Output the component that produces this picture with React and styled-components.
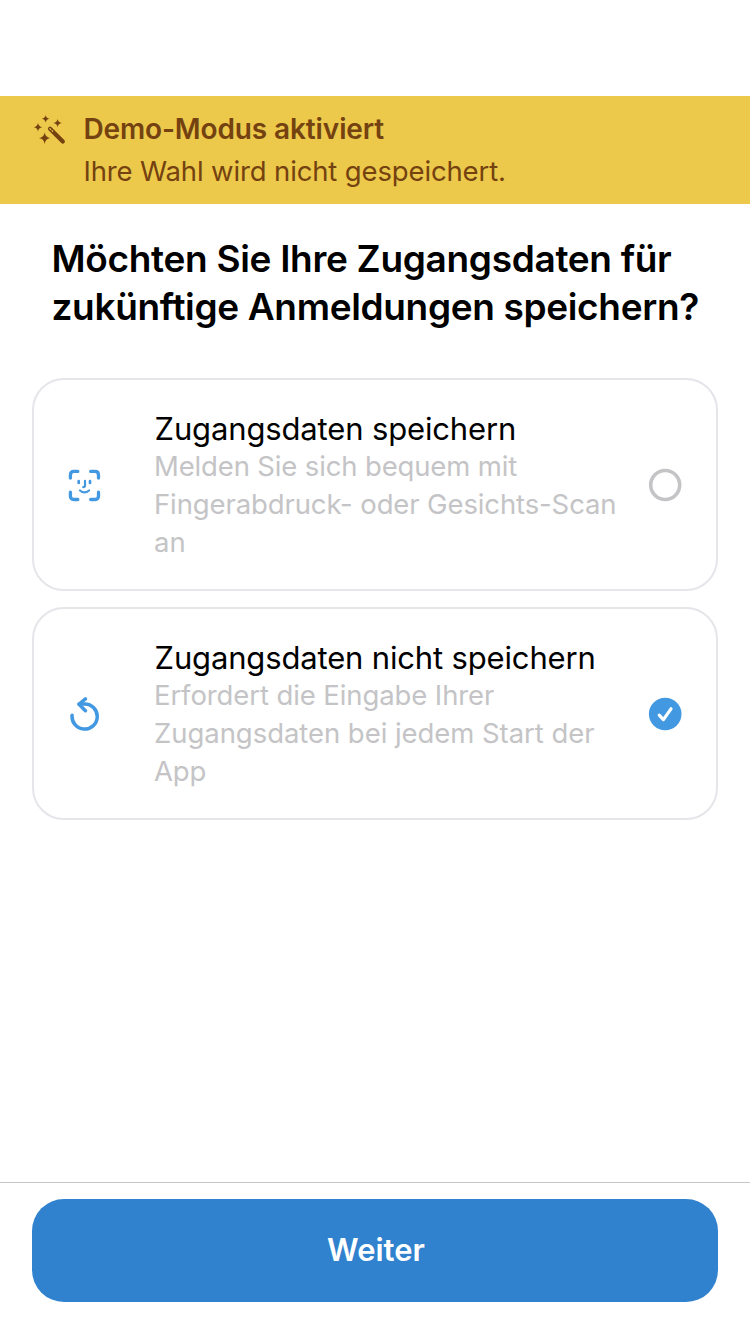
import React, { useState } from "react";
import styled, { createGlobalStyle } from "styled-components";

const GlobalStyle = createGlobalStyle`
  * { box-sizing: border-box; }
  body {
    margin: 0;
    background: #fff;
    color: #000;
    font-family: Inter, "Liberation Sans", sans-serif;
    -webkit-font-smoothing: antialiased;
  }
`;

const Screen = styled.div`
  display: flex;
  flex-direction: column;
  width: 750px;
  height: 1334px;
  padding-top: 96px;
  background: #fff;
`;

const Banner = styled.section`
  display: flex;
  flex: none;
  height: 108px;
  padding: 12px 32px 0;
  background: #ecc94b;
  color: #744210;
`;

const BannerIcon = styled.svg`
  flex: none;
  width: 36px;
  height: 36px;
  margin: 8px 15.4px 0 0;
  overflow: visible;
`;

const BannerText = styled.p`
  margin: 0;
  font-size: ${(p) => (p.$strong ? 28 : 27.5)}px;
  line-height: 42px;
  font-weight: ${(p) => (p.$strong ? 600 : 400)};
  letter-spacing: ${(p) => p.$tracking || 0}px;
  white-space: nowrap;
`;

const Main = styled.main`
  flex: 1;
  padding: 31px 32px 0;
`;

const Heading = styled.h1`
  margin: 0 0 47px 19.5px;
  font-size: 37px;
  line-height: 48px;
  font-weight: 600;
  white-space: nowrap;
`;

const HeadingLine = styled.span`
  display: block;
  letter-spacing: ${(p) => p.$tracking || 0}px;
`;

const Options = styled.div`
  display: flex;
  flex-direction: column;
  gap: 16px;
`;

const OptionCard = styled.button`
  display: flex;
  align-items: center;
  width: 100%;
  height: 213px;
  padding: 0 34px 0 33px;
  border: 2px solid #e5e5ea;
  border-radius: 32px;
  background: #fff;
  color: inherit;
  font-family: inherit;
  text-align: left;
`;

const OptionIcon = styled.svg`
  flex: none;
  width: 34px;
  height: 34px;
  margin: 0 53px 0 0;
  color: #4299e1;
`;

const OptionBody = styled.span`
  flex: 1;
  white-space: nowrap;
`;

const OptionTitle = styled.span`
  display: block;
  margin: 1px 0 -1px 0.6px;
  font-size: 31px;
  line-height: 38px;
  letter-spacing: ${(p) => p.$tracking || 0}px;
`;

const OptionLine = styled.span`
  display: block;
  font-size: 27.5px;
  line-height: 38px;
  color: #c4c4c6;
  letter-spacing: ${(p) => p.$tracking || 0}px;
`;

const RadioIcon = styled.svg`
  flex: none;
  width: 34px;
  height: 34px;
`;

const Footer = styled.footer`
  flex: none;
  height: 152px;
  padding: 16px 32px 0;
  border-top: 1px solid #c6c6c8;
`;

const PrimaryButton = styled.button`
  display: flex;
  align-items: center;
  justify-content: center;
  width: 100%;
  height: 103px;
  padding: 0 0 3px 2px;
  border: 0;
  border-radius: 32px;
  background: #3182ce;
  color: #fff;
  font-family: inherit;
  font-size: 31px;
  font-weight: 600;
`;

const WandIcon = () => (
  <BannerIcon viewBox="0 0 36 36" fill="currentColor" aria-hidden="true">
    <path d="M13.7-1Q14.1 2.1 17.4 2.7Q14.1 3.3 13.7 6.6Q13.1 3.3 9.9 2.7Q13.1 2.1 13.7-1Z" />
    <path d="M25.6 3.1Q26.2 6.5 29.8 7.1Q26.2 7.7 25.6 11.3Q25 7.7 21.4 7.1Q25 6.5 25.6 3.1Z" />
    <path d="M6 7.1Q6.6 10.7 10.2 11.3Q6.6 11.9 6 15.5Q5.4 11.9 1.8 11.3Q5.4 10.7 6 7.1Z" />
    <path d="M12.7 16.4Q13.5 21.2 18.3 22.1Q13.5 22.9 12.7 27.9Q11.8 22.9 7 22.1Q11.8 21.2 12.7 16.4Z" />
    <path d="M18 12.7L30.8 25.5" fill="none" stroke="currentColor" strokeWidth="4.2" strokeLinecap="round" />
    <path d="M17.9 12.6L22 16.7" fill="none" stroke="#ecc94b" strokeWidth="1.2" strokeLinecap="round" strokeDasharray="1 1.9" />
  </BannerIcon>
);

const FaceIcon = () => (
  <OptionIcon viewBox="0 0 34 34" fill="none" stroke="currentColor" strokeLinecap="round" strokeLinejoin="round" aria-hidden="true">
    <path strokeWidth="3.3" d="M3.4 10.1V6.9Q3.4 3.4 6.9 3.4H10.8M23.7 3.4H28Q31.5 3.4 31.5 6.9V10.1M31.5 24.2V28Q31.5 31.5 28 31.5H23.7M10.8 31.5H6.9Q3.4 31.5 3.4 28V24.2" />
    <path strokeWidth="2.7" d="M11.7 13.2V14.9M23 13.2V14.9" />
    <path strokeWidth="2.2" d="M18 12.8V17.5Q18 19.1 16.2 19.1M13 22.5Q17.5 26.3 22 22.5" />
  </OptionIcon>
);

const ResetIcon = () => (
  <OptionIcon viewBox="0 0 34 34" fill="none" stroke="currentColor" strokeWidth="3.5" strokeLinecap="round" strokeLinejoin="round" aria-hidden="true">
    <path d="M5.1 18.3A12.6 12.6 0 1 0 17.7 6.9H12" />
    <path d="M18.4 1.9L12 7.3L18.4 13.7" />
  </OptionIcon>
);

const Radio = ({ checked }) => (
  <RadioIcon viewBox="0 0 34 34" fill="none" aria-hidden="true">
    {checked ? (
      <>
        <circle cx="17.2" cy="17" r="16.3" fill="#4299e1" />
        <path d="M11.2 18.2L15.4 22.6L23 11.8" stroke="#fff" strokeWidth="3.2" strokeLinecap="round" strokeLinejoin="round" />
      </>
    ) : (
      <circle cx="17.2" cy="17" r="14.5" stroke="#c4c4c6" strokeWidth="3.6" />
    )}
  </RadioIcon>
);

const options = [
  {
    id: "save",
    icon: <FaceIcon />,
    title: ["Zugangsdaten speichern", -0.15],
    lines: [
      ["Melden Sie sich bequem mit", -0.15],
      ["Fingerabdruck- oder Gesichts-Scan", -0.12],
      ["an", 0],
    ],
  },
  {
    id: "discard",
    icon: <ResetIcon />,
    title: ["Zugangsdaten nicht speichern", -0.16],
    lines: [
      ["Erfordert die Eingabe Ihrer", -0.1],
      ["Zugangsdaten bei jedem Start der", -0.05],
      ["App", -0.2],
    ],
  },
];

export default function App() {
  const [selected, setSelected] = useState("discard");
  return (
    <>
      <GlobalStyle />
      <Screen>
        <Banner>
          <WandIcon />
          <div>
            <BannerText $strong $tracking={-0.12}>Demo-Modus aktiviert</BannerText>
            <BannerText $tracking={-0.14}>Ihre Wahl wird nicht gespeichert.</BannerText>
          </div>
        </Banner>
        <Main>
          <Heading>
            <HeadingLine $tracking={-0.31}>Möchten Sie Ihre Zugangsdaten für</HeadingLine>
            <HeadingLine $tracking={-0.34}>zukünftige Anmeldungen speichern?</HeadingLine>
          </Heading>
          <Options role="radiogroup">
            {options.map((option) => (
              <OptionCard
                key={option.id}
                type="button"
                role="radio"
                aria-checked={selected === option.id}
                onClick={() => setSelected(option.id)}
              >
                {option.icon}
                <OptionBody>
                  <OptionTitle $tracking={option.title[1]}>{option.title[0]}</OptionTitle>
                  {option.lines.map(([text, tracking]) => (
                    <OptionLine key={text} $tracking={tracking}>{text}</OptionLine>
                  ))}
                </OptionBody>
                <Radio checked={selected === option.id} />
              </OptionCard>
            ))}
          </Options>
        </Main>
        <Footer>
          <PrimaryButton type="button">Weiter</PrimaryButton>
        </Footer>
      </Screen>
    </>
  );
}
